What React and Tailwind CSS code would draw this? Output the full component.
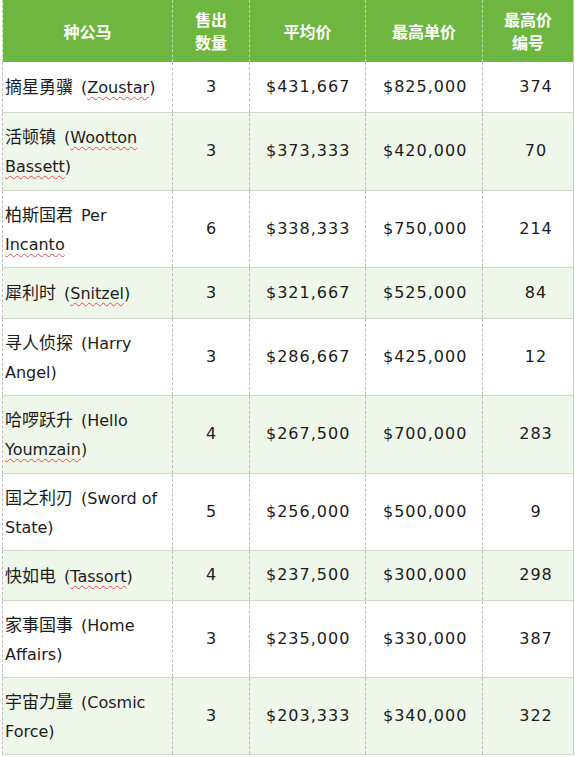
import React from 'react'

// spell-check squiggle under "misspelled" horse names
function W({ children }) {
  return <span className="underline decoration-wavy decoration-[#e05050] decoration-1 underline-offset-[3px]">{children}</span>
}

function C({ children }) {
  return <span className="text-[17px] mr-[8px] font-['Noto_Sans_CJK_SC',sans-serif]">{children}</span>
}

const rows = [
  { name: [<><C>摘星勇骥</C>(<W>Zoustar</W>)</>], sold: '3', avg: '$431,667', max: '$825,000', lot: '374', h: 'h-[50px]' },
  { name: [<><C>活顿镇</C>(<W>Wootton</W></>, <><W>Bassett</W>)</>], sold: '3', avg: '$373,333', max: '$420,000', lot: '70', h: 'h-[78px]' },
  { name: [<><C>柏斯国君</C>Per</>, <><W>Incanto</W></>], sold: '6', avg: '$338,333', max: '$750,000', lot: '214', h: 'h-[77px]' },
  { name: [<><C>犀利时</C>(<W>Snitzel</W>)</>], sold: '3', avg: '$321,667', max: '$525,000', lot: '84', h: 'h-[51px]' },
  { name: [<><C>寻人侦探</C>(Harry</>, <>Angel)</>], sold: '3', avg: '$286,667', max: '$425,000', lot: '12', h: 'h-[77px]' },
  { name: [<><C>哈啰跃升</C>(Hello</>, <><W>Youmzain</W>)</>], sold: '4', avg: '$267,500', max: '$700,000', lot: '283', h: 'h-[78px]' },
  { name: [<><C>国之利刃</C>(Sword of</>, <>State)</>], sold: '5', avg: '$256,000', max: '$500,000', lot: '9', h: 'h-[77px]' },
  { name: [<><C>快如电</C>(<W>Tassort</W>)</>], sold: '4', avg: '$237,500', max: '$300,000', lot: '298', h: 'h-[50px]' },
  { name: [<><C>家事国事</C>(Home</>, <>Affairs)</>], sold: '3', avg: '$235,000', max: '$330,000', lot: '387', h: 'h-[77px]' },
  { name: [<><C>宇宙力量</C>(Cosmic</>, <>Force)</>], sold: '3', avg: '$203,333', max: '$340,000', lot: '322', h: 'h-[77px]' },
]

export default function App() {
  const body = "font-['DejaVu_Sans','Noto_Sans_CJK_SC',sans-serif] text-[16px] text-[#1c1c1c]"
  return (
    <div className="w-[575px] h-[757px] bg-white pl-[2px]">
      <table className="w-[571px] table-fixed border-collapse border-r border-[#c8c8c8]">
        <colgroup>
          <col className="w-[170px]" />
          <col className="w-[77px]" />
          <col className="w-[116px]" />
          <col className="w-[117px]" />
          <col className="w-[91px]" />
        </colgroup>
        <thead>
          <tr className="h-[62px] bg-[#6fb640] text-white font-bold text-[16px] leading-[23px] font-['Noto_Sans_CJK_SC',sans-serif]">
            <th className="border-l border-dashed border-[#b9dca0]">种公马</th>
            <th className="border-l border-dashed border-[#b9dca0]">售出<br />数量</th>
            <th className="border-l border-dashed border-[#b9dca0]">平均价</th>
            <th className="border-l border-dashed border-[#b9dca0]">最高单价</th>
            <th className="border-l border-dashed border-[#b9dca0]">最高价<br />编号</th>
          </tr>
        </thead>
        <tbody className={body}>
          {rows.map((r, i) => (
            <tr key={i} className={`${r.h} border-b border-[#cddbc2] ${i % 2 ? 'bg-[#eff6ea]' : 'bg-white'}`}>
              <td className="border-l border-dashed border-[#bdbdbd] pl-[2px] leading-[29px] align-middle">
                {r.name.map((l, j) => <div key={j} className="whitespace-nowrap">{l}</div>)}
              </td>
              <td className="border-l border-dashed border-[#bdbdbd] text-center">{r.sold}</td>
              <td className="border-l border-dashed border-[#bdbdbd] pl-[16px] tracking-[1px]">{r.avg}</td>
              <td className="border-l border-dashed border-[#bdbdbd] pl-[17px] tracking-[1px]">{r.max}</td>
              <td className="border-l border-dashed border-[#bdbdbd] pl-[16px] text-center tracking-[1px]">{r.lot}</td>
            </tr>
          ))}
        </tbody>
      </table>
    </div>
  )
}
